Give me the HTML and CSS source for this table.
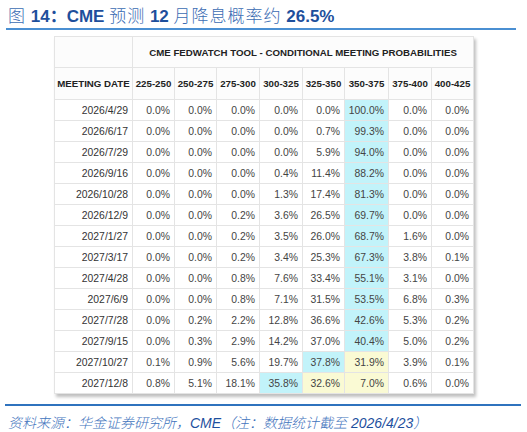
FILE: index.html
```html
<!DOCTYPE html>
<html lang="zh-CN">

<head>
    <meta charset="UTF-8">
    <title>CME 预测 12 月降息概率</title>
    <link rel="stylesheet" href="styles.css">
</head>

<body>
    <div class="titulo">
        <span class="cn">图</span> <b>14：CME</b> <span class="cn">预测</span> <b>12</b> <span class="cn">月降息概率约</span> <b>26.5%</b>
    </div>

    <div class="quadro">
        <table class="fedwatch">
            <colgroup>
                <col style="width:78px">
                <col style="width:42px">
                <col style="width:42px">
                <col style="width:43px">
                <col style="width:43px">
                <col style="width:42px">
                <col style="width:44px">
                <col style="width:43px">
                <col style="width:42px">
            </colgroup>
            <tr class="topo">
                <th></th>
                <th colspan="8">CME FEDWATCH TOOL - CONDITIONAL MEETING PROBABILITIES</th>
            </tr>
            <tr class="faixas">
                <th>MEETING DATE</th>
                <th>225-250</th>
                <th>250-275</th>
                <th>275-300</th>
                <th>300-325</th>
                <th>325-350</th>
                <th>350-375</th>
                <th>375-400</th>
                <th>400-425</th>
            </tr>
            <tr><td>2026/4/29</td><td>0.0%</td><td>0.0%</td><td>0.0%</td><td>0.0%</td><td>0.0%</td><td class="ciano">100.0%</td><td>0.0%</td><td>0.0%</td></tr>
            <tr><td>2026/6/17</td><td>0.0%</td><td>0.0%</td><td>0.0%</td><td>0.0%</td><td>0.7%</td><td class="ciano">99.3%</td><td>0.0%</td><td>0.0%</td></tr>
            <tr><td>2026/7/29</td><td>0.0%</td><td>0.0%</td><td>0.0%</td><td>0.0%</td><td>5.9%</td><td class="ciano">94.0%</td><td>0.0%</td><td>0.0%</td></tr>
            <tr><td>2026/9/16</td><td>0.0%</td><td>0.0%</td><td>0.0%</td><td>0.4%</td><td>11.4%</td><td class="ciano">88.2%</td><td>0.0%</td><td>0.0%</td></tr>
            <tr><td>2026/10/28</td><td>0.0%</td><td>0.0%</td><td>0.0%</td><td>1.3%</td><td>17.4%</td><td class="ciano">81.3%</td><td>0.0%</td><td>0.0%</td></tr>
            <tr><td>2026/12/9</td><td>0.0%</td><td>0.0%</td><td>0.2%</td><td>3.6%</td><td>26.5%</td><td class="ciano">69.7%</td><td>0.0%</td><td>0.0%</td></tr>
            <tr><td>2027/1/27</td><td>0.0%</td><td>0.0%</td><td>0.2%</td><td>3.5%</td><td>26.0%</td><td class="ciano">68.7%</td><td>1.6%</td><td>0.0%</td></tr>
            <tr><td>2027/3/17</td><td>0.0%</td><td>0.0%</td><td>0.2%</td><td>3.4%</td><td>25.3%</td><td class="ciano">67.3%</td><td>3.8%</td><td>0.1%</td></tr>
            <tr><td>2027/4/28</td><td>0.0%</td><td>0.0%</td><td>0.8%</td><td>7.6%</td><td>33.4%</td><td class="ciano">55.1%</td><td>3.1%</td><td>0.0%</td></tr>
            <tr><td>2027/6/9</td><td>0.0%</td><td>0.0%</td><td>0.8%</td><td>7.1%</td><td>31.5%</td><td class="ciano">53.5%</td><td>6.8%</td><td>0.3%</td></tr>
            <tr><td>2027/7/28</td><td>0.0%</td><td>0.2%</td><td>2.2%</td><td>12.8%</td><td>36.6%</td><td class="ciano">42.6%</td><td>5.3%</td><td>0.2%</td></tr>
            <tr><td>2027/9/15</td><td>0.0%</td><td>0.3%</td><td>2.9%</td><td>14.2%</td><td>37.0%</td><td class="ciano">40.4%</td><td>5.0%</td><td>0.2%</td></tr>
            <tr><td>2027/10/27</td><td>0.1%</td><td>0.9%</td><td>5.6%</td><td>19.7%</td><td class="ciano">37.8%</td><td class="amarelo">31.9%</td><td>3.9%</td><td>0.1%</td></tr>
            <tr><td>2027/12/8</td><td>0.8%</td><td>5.1%</td><td>18.1%</td><td class="ciano">35.8%</td><td class="amarelo">32.6%</td><td class="amarelo">7.0%</td><td>0.6%</td><td>0.0%</td></tr>
        </table>
    </div>

    <div class="fonte">
        <span class="cn">资料来源：华金证券研究所，</span><span class="lat">CME</span><span class="cn">（注：数据统计截至</span> <span class="lat">2026/4/23</span><span class="cn">）</span>
    </div>
</body>

</html>
```

FILE: styles.css
```css
html {
    background-color: #ffffff;
}

body {
    margin: 0;
    width: 527px;
    height: 432px;
    font-family: "Liberation Sans", Arial, "Noto Sans CJK SC", sans-serif;
    overflow: hidden;
}

.titulo {
    margin: 0 11px 0 6px;
    padding: 3px 0 2px 2px;
    height: 23px;
    border-bottom: 2px solid #4a8fd2;
    font-size: 17px;
    line-height: 23px;
    color: #1e4f9c;
    white-space: nowrap;
}

.titulo b {
    font-weight: bold;
}

.titulo .cn {
    font-family: "Noto Sans CJK SC", sans-serif;
    font-weight: 300;
    color: #3b6cb3;
    letter-spacing: 1px;
}

.quadro {
    margin: 6px 0 0 54px;
    width: 419px;
}

.fedwatch {
    border-collapse: collapse;
    table-layout: fixed;
    width: 419px;
    box-shadow: 2px 3px 3px rgba(0, 0, 0, 0.25);
    color: #333333;
}

.fedwatch th,
.fedwatch td {
    border: 1px solid #e4e4e4;
    padding: 0;
    white-space: nowrap;
    overflow: hidden;
}

.fedwatch th {
    font-size: 9.7px;
    font-weight: bold;
    color: #222222;
    text-align: center;
}

.topo th {
    height: 30px;
    background-color: #fcfcfc;
}

.faixas th {
    height: 31px;
    background-color: #fcfcfc;
}

.fedwatch td {
    height: 20px;
    font-size: 10.4px;
    text-align: right;
    padding-right: 4px;
    color: #444444;
}

.fedwatch td:first-child {
    color: #333333;
}

.ciano {
    background-color: #c2f3fa;
}

.amarelo {
    background-color: #fafad4;
}

.fonte {
    margin: 10px 6px 0 5px;
    padding: 6px 0 0 3px;
    border-top: 2px solid #2f73be;
    font-size: 14px;
    font-style: italic;
    white-space: nowrap;
}

.fonte .cn {
    font-family: "Noto Sans CJK SC", sans-serif;
    font-weight: 300;
    color: #3f74bd;
}

.fonte .lat {
    color: #1d4f9e;
}
```
